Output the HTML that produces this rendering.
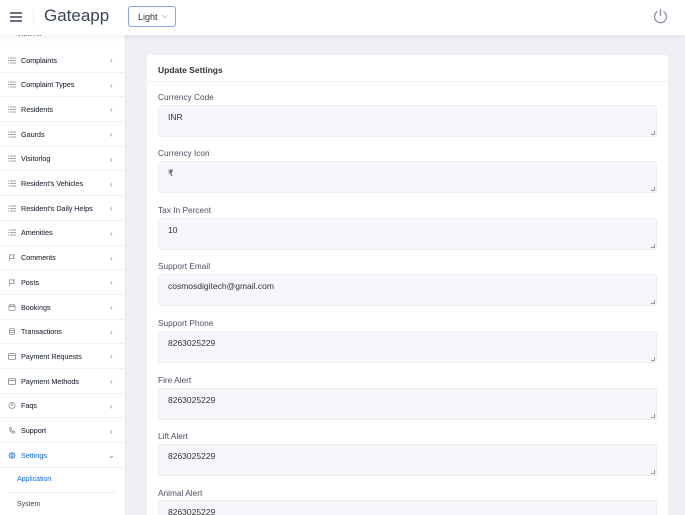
<!DOCTYPE html>
<html><head><meta charset="utf-8"><style>
*{box-sizing:border-box;margin:0;padding:0}
html,body{width:685px;height:515px;overflow:hidden}
body{background:#eef0f5;font-family:"Liberation Sans",sans-serif;color:#3b4456;position:relative}
.hdr{position:absolute;left:0;top:0;width:685px;height:35px;background:#fff;box-shadow:0 2px 6px rgba(0,0,0,.06);z-index:2}
.burger{position:absolute;left:10px;top:12px;width:12px}
.burger i{display:block;height:1.5px;background:#6b7280;margin-bottom:2.5px}
.sep{position:absolute;left:33px;top:10px;width:1px;height:16px;background:#eee}
.logo{position:absolute;left:44px;top:6px;font-size:17px;color:#3b4456}
.sel{position:absolute;left:128px;top:6px;width:48px;height:21px;border:1px solid #8aa4e8;border-radius:3px;font-size:9px;padding:5px 0 0 9px;color:#333}
.sel span{position:absolute;right:7px;top:4px;font-size:8px;color:#888}
.pw{position:absolute;left:652px;top:8px}
.side{position:absolute;left:0;top:35px;width:126px;height:480px;background:#fff;border-right:1px solid #e8e9ee;overflow:hidden}
.va{position:absolute;left:17px;top:-4px;font-size:7px;color:#555}
.it{position:absolute;left:0;width:126px;height:24.7px;border-bottom:1px solid #f0f0f3;font-size:7.2px;color:#3e4350;text-shadow:0 0 .3px #3e4350}
.it .ic{position:absolute;left:8px;top:8.5px;width:8px;height:7px}
.it .t{position:absolute;left:21px;top:7.5px}
.it .ar{position:absolute;left:110px;top:8px;font-size:8px;color:#888;text-shadow:none}
.sub{position:absolute;left:17px;font-size:7px}
.card{position:absolute;left:147px;top:55px;width:521px;height:470px;background:#fff;border-radius:3px}
.ch{height:27px;border-bottom:1px solid #eef0f3;font-size:8.5px;font-weight:bold;padding:10px 0 0 11px;color:#333}
.lb{position:absolute;left:11px;font-size:8.3px;color:#4a5060}
.ta{position:absolute;left:11px;width:499px;height:32px;background:#f6f7fb;border:1px solid #eceef3;border-radius:3px;font-size:8.5px;padding:6px 0 0 9px;color:#333}
.ta:after{content:"";position:absolute;right:1px;bottom:1px;width:3px;height:3px;border-right:1px solid #999;border-bottom:1px solid #999}
</style></head><body>
<div class="hdr">
<div class="burger"><i></i><i></i><i></i></div><div class="sep"></div>
<div class="logo">Gateapp</div>
<div class="sel">Light<span>⌵</span></div>
<svg class="pw" width="17" height="17" viewBox="0 0 20 20" fill="none" stroke="#8a93a6" stroke-width="1.6" stroke-linecap="round"><path d="M10 2v7"/><path d="M6 4.5a7 7 0 1 0 8 0"/></svg>
</div>
<div class="side">
<div class="va">View All</div>
<div class="it" style="top:13px"><svg class="ic" viewBox="0 0 8 7" stroke="#888" stroke-width=".8"><path d="M0 1h1M2 1h6M0 3.5h1M2 3.5h6M0 6h1M2 6h6"/></svg><span class="t">Complaints</span><span class="ar">‹</span></div>
<div class="it" style="top:37.7px"><svg class="ic" viewBox="0 0 8 7" stroke="#888" stroke-width=".8"><path d="M0 1h1M2 1h6M0 3.5h1M2 3.5h6M0 6h1M2 6h6"/></svg><span class="t">Complaint Types</span><span class="ar">‹</span></div>
<div class="it" style="top:62.4px"><svg class="ic" viewBox="0 0 8 7" stroke="#888" stroke-width=".8"><path d="M0 1h1M2 1h6M0 3.5h1M2 3.5h6M0 6h1M2 6h6"/></svg><span class="t">Residents</span><span class="ar">‹</span></div>
<div class="it" style="top:87.1px"><svg class="ic" viewBox="0 0 8 7" stroke="#888" stroke-width=".8"><path d="M0 1h1M2 1h6M0 3.5h1M2 3.5h6M0 6h1M2 6h6"/></svg><span class="t">Gaurds</span><span class="ar">‹</span></div>
<div class="it" style="top:111.8px"><svg class="ic" viewBox="0 0 8 7" stroke="#888" stroke-width=".8"><path d="M0 1h1M2 1h6M0 3.5h1M2 3.5h6M0 6h1M2 6h6"/></svg><span class="t">Visitorlog</span><span class="ar">‹</span></div>
<div class="it" style="top:136.5px"><svg class="ic" viewBox="0 0 8 7" stroke="#888" stroke-width=".8"><path d="M0 1h1M2 1h6M0 3.5h1M2 3.5h6M0 6h1M2 6h6"/></svg><span class="t">Resident's Vehicles</span><span class="ar">‹</span></div>
<div class="it" style="top:161.2px"><svg class="ic" viewBox="0 0 8 7" stroke="#888" stroke-width=".8"><path d="M0 1h1M2 1h6M0 3.5h1M2 3.5h6M0 6h1M2 6h6"/></svg><span class="t">Resident's Daily Helps</span><span class="ar">‹</span></div>
<div class="it" style="top:185.9px"><svg class="ic" viewBox="0 0 8 7" stroke="#888" stroke-width=".8"><path d="M0 1h1M2 1h6M0 3.5h1M2 3.5h6M0 6h1M2 6h6"/></svg><span class="t">Amenities</span><span class="ar">‹</span></div>
<div class="it" style="top:210.6px"><svg class="ic" viewBox="0 0 8 8" fill="none" stroke="#888" stroke-width=".8"><path d="M1 8V1h6L5.5 3 7 5H1"/></svg><span class="t">Comments</span><span class="ar">‹</span></div>
<div class="it" style="top:235.3px"><svg class="ic" viewBox="0 0 8 8" fill="none" stroke="#888" stroke-width=".8"><path d="M1 8V1h6L5.5 3 7 5H1"/></svg><span class="t">Posts</span><span class="ar">‹</span></div>
<div class="it" style="top:260px"><svg class="ic" viewBox="0 0 8 8" fill="none" stroke="#888" stroke-width=".8"><rect x=".5" y="1" width="7" height="6.5" rx="1"/><path d="M.5 3h7M2.5 0v2M5.5 0v2"/></svg><span class="t">Bookings</span><span class="ar">‹</span></div>
<div class="it" style="top:284.7px"><svg class="ic" viewBox="0 0 8 8" fill="none" stroke="#888" stroke-width=".8"><ellipse cx="4" cy="1.8" rx="3" ry="1.2"/><path d="M1 1.8v4.4c0 .7 1.3 1.2 3 1.2s3-.5 3-1.2V1.8M1 4c0 .7 1.3 1.2 3 1.2S7 4.7 7 4"/></svg><span class="t">Transactions</span><span class="ar">‹</span></div>
<div class="it" style="top:309.4px"><svg class="ic" viewBox="0 0 8 7" fill="none" stroke="#888" stroke-width=".8"><rect x=".5" y=".5" width="7" height="6" rx="1"/><path d="M.5 2.5h7"/></svg><span class="t">Payment Requests</span><span class="ar">‹</span></div>
<div class="it" style="top:334.1px"><svg class="ic" viewBox="0 0 8 7" fill="none" stroke="#888" stroke-width=".8"><rect x=".5" y=".5" width="7" height="6" rx="1"/><path d="M.5 2.5h7"/></svg><span class="t">Payment Methods</span><span class="ar">‹</span></div>
<div class="it" style="top:358.8px"><svg class="ic" viewBox="0 0 8 8" fill="none" stroke="#888" stroke-width=".8"><circle cx="4" cy="4" r="3.5"/><path d="M3 3a1 1 0 1 1 1 1v1M4 6v.4"/></svg><span class="t">Faqs</span><span class="ar">‹</span></div>
<div class="it" style="top:383.5px"><svg class="ic" viewBox="0 0 8 8" fill="none" stroke="#888" stroke-width=".8"><path d="M1 1l1.5-.5 1 2-1 .8a5 5 0 0 0 2.2 2.2l.8-1 2 1L7 7C3.5 7 1 4.5 1 1z"/></svg><span class="t">Support</span><span class="ar">‹</span></div>
<div class="it" style="top:408.2px;color:#3b82f6;text-shadow:0 0 .3px #3b82f6"><svg class="ic" viewBox="0 0 8 8" fill="none" stroke="#3b82f6" stroke-width=".9"><circle cx="4" cy="4" r="1.3"/><path d="M4 .4L5 1.6 6.6 1.4 6.6 3 7.6 4 6.6 5 6.6 6.6 5 6.4 4 7.6 3 6.4 1.4 6.6 1.4 5 .4 4 1.4 3 1.4 1.4 3 1.6z"/></svg><span class="t">Settings</span><span class="ar" style="left:108px">⌄</span></div>
<div class="sub" style="top:441px;color:#3b82f6;text-shadow:0 0 .3px #3b82f6">Application</div>
<div style="position:absolute;left:8px;top:457px;width:108px;height:1px;background:#f0f0f3"></div>
<div class="sub" style="top:466px;color:#444">System</div>
</div>
<div class="card">
<div class="ch">Update Settings</div>
<div class="lb" style="top:37px">Currency Code</div><div class="ta" style="top:50px">INR</div>
<div class="lb" style="top:93px">Currency Icon</div><div class="ta" style="top:106px">₹</div>
<div class="lb" style="top:150px">Tax In Percent</div><div class="ta" style="top:163px">10</div>
<div class="lb" style="top:206px">Support Email</div><div class="ta" style="top:219px">cosmosdigitech@gmail.com</div>
<div class="lb" style="top:263px">Support Phone</div><div class="ta" style="top:276px">8263025229</div>
<div class="lb" style="top:320px">Fire Alert</div><div class="ta" style="top:333px">8263025229</div>
<div class="lb" style="top:376px">Lift Alert</div><div class="ta" style="top:389px">8263025229</div>
<div class="lb" style="top:433px">Animal Alert</div><div class="ta" style="top:445px">8263025229</div>
</div>
</body></html>
